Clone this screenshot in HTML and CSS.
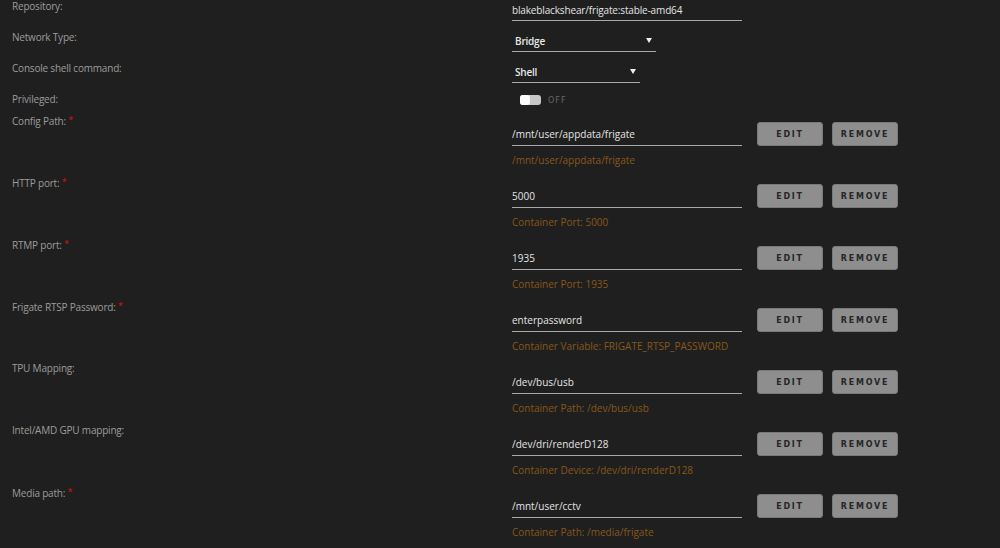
FILE: index.html
```html
<!DOCTYPE html>
<html lang="en">
<head>
  <meta charset="UTF-8">
  <meta name="viewport" content="width=device-width, initial-scale=1.0">
  <title>Frigate - Update Container</title>
  <link rel="stylesheet" href="styles.css">
</head>
<body>
  <div class="form">
    <div class="row basic">
      <div class="label">Repository:</div>
      <div class="value"><input class="text repo" type="text" value="blakeblackshear/frigate:stable-amd64"></div>
    </div>
    <div class="row basic">
      <div class="label">Network Type:</div>
      <div class="value">
        <div class="select net"><span>Bridge</span><span class="arrow"></span></div>
      </div>
    </div>
    <div class="row basic">
      <div class="label">Console shell command:</div>
      <div class="value">
        <div class="select shell"><span>Shell</span><span class="arrow"></span></div>
      </div>
    </div>
    <div class="row priv">
      <div class="label">Privileged:</div>
      <div class="value switch-wrap">
        <span class="switch"><span class="knob"></span></span>
        <span class="switch-text">OFF</span>
      </div>
    </div>

    <div class="row config">
      <div class="label">Config Path: <span class="req">*</span></div>
      <div class="value">
        <div class="field">
          <input class="text" type="text" value="/mnt/user/appdata/frigate">
          <button class="btn">EDIT</button>
          <button class="btn">REMOVE</button>
        </div>
        <div class="hint">/mnt/user/appdata/frigate</div>
      </div>
    </div>
    <div class="row config">
      <div class="label">HTTP port: <span class="req">*</span></div>
      <div class="value">
        <div class="field">
          <input class="text" type="text" value="5000">
          <button class="btn">EDIT</button>
          <button class="btn">REMOVE</button>
        </div>
        <div class="hint">Container Port: 5000</div>
      </div>
    </div>
    <div class="row config">
      <div class="label">RTMP port: <span class="req">*</span></div>
      <div class="value">
        <div class="field">
          <input class="text" type="text" value="1935">
          <button class="btn">EDIT</button>
          <button class="btn">REMOVE</button>
        </div>
        <div class="hint">Container Port: 1935</div>
      </div>
    </div>
    <div class="row config">
      <div class="label">Frigate RTSP Password: <span class="req">*</span></div>
      <div class="value">
        <div class="field">
          <input class="text" type="text" value="enterpassword">
          <button class="btn">EDIT</button>
          <button class="btn">REMOVE</button>
        </div>
        <div class="hint">Container Variable: FRIGATE_RTSP_PASSWORD</div>
      </div>
    </div>
    <div class="row config">
      <div class="label">TPU Mapping:</div>
      <div class="value">
        <div class="field">
          <input class="text" type="text" value="/dev/bus/usb">
          <button class="btn">EDIT</button>
          <button class="btn">REMOVE</button>
        </div>
        <div class="hint">Container Path: /dev/bus/usb</div>
      </div>
    </div>
    <div class="row config">
      <div class="label">Intel/AMD GPU mapping:</div>
      <div class="value">
        <div class="field">
          <input class="text" type="text" value="/dev/dri/renderD128">
          <button class="btn">EDIT</button>
          <button class="btn">REMOVE</button>
        </div>
        <div class="hint">Container Device: /dev/dri/renderD128</div>
      </div>
    </div>
    <div class="row config">
      <div class="label">Media path: <span class="req">*</span></div>
      <div class="value">
        <div class="field">
          <input class="text" type="text" value="/mnt/user/cctv">
          <button class="btn">EDIT</button>
          <button class="btn">REMOVE</button>
        </div>
        <div class="hint">Container Path: /media/frigate</div>
      </div>
    </div>
  </div>
</body>
</html>
```

FILE: styles.css
```css
* {
  margin: 0;
  padding: 0;
  box-sizing: border-box;
}

body {
  font-family: 'Open Sans', 'Liberation Sans', sans-serif;
  font-size: 10px;
  background: #1f1f1f;
  color: #999;
  overflow: hidden;
}

.form {
  margin-top: -1px;
}

.row {
  display: grid;
  grid-template-columns: 512px 1fr;
}

.row.basic {
  height: 31px;
}

.row.priv {
  height: 21px;
}

.row.config {
  height: 62px;
}

.label {
  padding-left: 12px;
  line-height: 14px;
  font-size: 10px;
  letter-spacing: -0.2px;
  color: #9c9c9c;
}

.req {
  color: #d11;
  font-size: 9px;
  vertical-align: 2px;
}

input.text {
  display: block;
  width: 230px;
  height: 22px;
  background: transparent;
  border: none;
  border-bottom: 1px solid #a8a8a8;
  color: #e4e4e4;
  font-family: inherit;
  font-size: 10px;
  outline: none;
}

input.repo {
  letter-spacing: -0.15px;
}

.config input.text {
  height: 24px;
  padding-top: 1px;
}

.select {
  display: flex;
  justify-content: space-between;
  align-items: center;
  height: 22px;
  padding: 0 4px 0 3px;
  border-bottom: 1px solid #a8a8a8;
  color: #e8e8e8;
  font-size: 10px;
  font-weight: 600;
  letter-spacing: -0.2px;
}

.select.net {
  width: 144px;
}

.select.shell {
  width: 128px;
}

.arrow {
  width: 0;
  height: 0;
  border-left: 3px solid transparent;
  border-right: 3px solid transparent;
  border-top: 5px solid #eee;
}

.switch-wrap {
  display: flex;
  align-items: center;
  gap: 7px;
  padding-left: 8px;
  height: 14px;
  margin-top: 1px;
}

.switch {
  display: flex;
  width: 21px;
  height: 10px;
  border-radius: 3px;
  background: #c6c6c6;
}

.knob {
  width: 10px;
  height: 10px;
  border-radius: 3px;
  background: #fafafa;
}

.switch-text {
  font-family: 'DejaVu Sans', sans-serif;
  font-size: 8px;
  letter-spacing: 1px;
  color: #666;
}

.config .value {
  padding-top: 9px;
}

.field {
  display: flex;
  align-items: center;
}

.btn {
  width: 66px;
  height: 24px;
  margin-left: 9px;
  background: #8e8e8e;
  border: 1px solid #7a7a7a;
  border-radius: 3px;
  color: #262626;
  font-family: 'DejaVu Sans', sans-serif;
  font-size: 8px;
  font-weight: bold;
  letter-spacing: 1.8px;
}

.field .btn:first-of-type {
  margin-left: 15px;
}

.hint {
  margin-top: 7px;
  line-height: 14px;
  font-size: 10px;
  color: #87571a;
}
```
